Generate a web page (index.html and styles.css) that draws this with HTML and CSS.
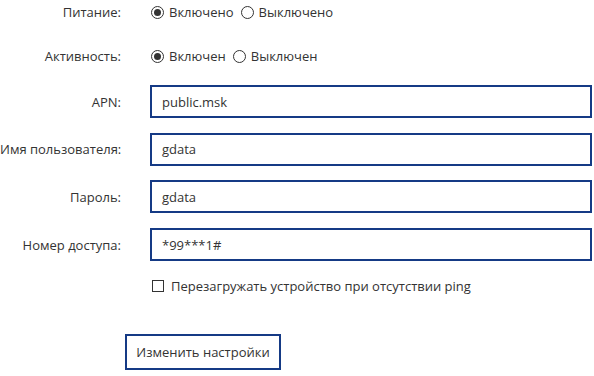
FILE: index.html
```html
<!DOCTYPE html>
<html lang="ru">
<head>
<meta charset="utf-8">
<link rel="stylesheet" href="styles.css">
</head>
<body>
<form class="form">
  <div class="row row-radio first">
    <div class="label">Питание:</div>
    <div class="control radios">
      <span class="opt"><span class="radio checked"></span>Включено</span>
      <span class="opt"><span class="radio"></span>Выключено</span>
    </div>
  </div>
  <div class="row row-radio second">
    <div class="label">Активность:</div>
    <div class="control radios">
      <span class="opt"><span class="radio checked"></span>Включен</span>
      <span class="opt"><span class="radio"></span>Выключен</span>
    </div>
  </div>
  <div class="row row-input">
    <div class="label">APN:</div>
    <div class="control"><div class="input">public.msk</div></div>
  </div>
  <div class="row row-input">
    <div class="label">Имя пользователя:</div>
    <div class="control"><div class="input">gdata</div></div>
  </div>
  <div class="row row-input">
    <div class="label">Пароль:</div>
    <div class="control"><div class="input">gdata</div></div>
  </div>
  <div class="row row-input">
    <div class="label">Номер доступа:</div>
    <div class="control"><div class="input">*99***1#</div></div>
  </div>
  <div class="row row-check">
    <div class="label"></div>
    <div class="control"><span class="opt"><span class="checkbox"></span>Перезагружать устройство при отсутствии ping</span></div>
  </div>
  <div class="row row-button">
    <button type="button" class="btn">Изменить настройки</button>
  </div>
</form>
</body>
</html>
```
FILE: styles.css
```css
html, body {
  margin: 0;
  padding: 0;
  background: #ffffff;
}
body {
  font-family: "Open Sans", "Noto Sans", "Liberation Sans", sans-serif;
  font-size: 13px;
  color: #333333;
  width: 594px;
  height: 376px;
  overflow: hidden;
}
.form {
  display: flex;
  flex-direction: column;
  padding-right: 2px;
}
.row {
  display: flex;
  align-items: center;
}
.label {
  width: 121px;
  flex: none;
  text-align: right;
  margin-right: 29px;
  white-space: nowrap;
}
.control {
  flex: 1;
  display: flex;
  align-items: center;
}
.row-radio {
  height: 24px;
}
.row-radio.first {
  margin-bottom: 20px;
}
.row-radio.second {
  margin-bottom: 17px;
}
.row-radio .control {
  padding-left: 1px;
}
.radios .opt {
  margin-right: 7px;
}
.opt {
  display: inline-flex;
  align-items: center;
  white-space: nowrap;
}
.radio {
  width: 11px;
  height: 11px;
  border: 1px solid #333333;
  border-radius: 50%;
  margin-right: 5px;
  display: inline-flex;
  align-items: center;
  justify-content: center;
  box-sizing: content-box;
}
.radio.checked::after {
  content: "";
  width: 7px;
  height: 7px;
  border-radius: 50%;
  background: #333333;
}
.row-input {
  height: 33px;
  margin-bottom: 14.7px;
}
.input {
  flex: 1;
  height: 33px;
  box-sizing: border-box;
  border: 2px solid #153a85;
  padding-left: 10px;
  display: flex;
  align-items: center;
}
.row-check {
  height: 22px;
  margin-top: -0.7px;
}
.checkbox {
  width: 10px;
  height: 10px;
  border: 1px solid #333333;
  margin-right: 7px;
  margin-left: 2px;
}
.row-button {
  margin-top: 37px;
  padding-left: 125px;
}
.btn {
  font: inherit;
  color: #333333;
  background: #ffffff;
  border: 2px solid #153a85;
  height: 36px;
  width: 156px;
  padding: 0;
  margin: 0;
}
```
